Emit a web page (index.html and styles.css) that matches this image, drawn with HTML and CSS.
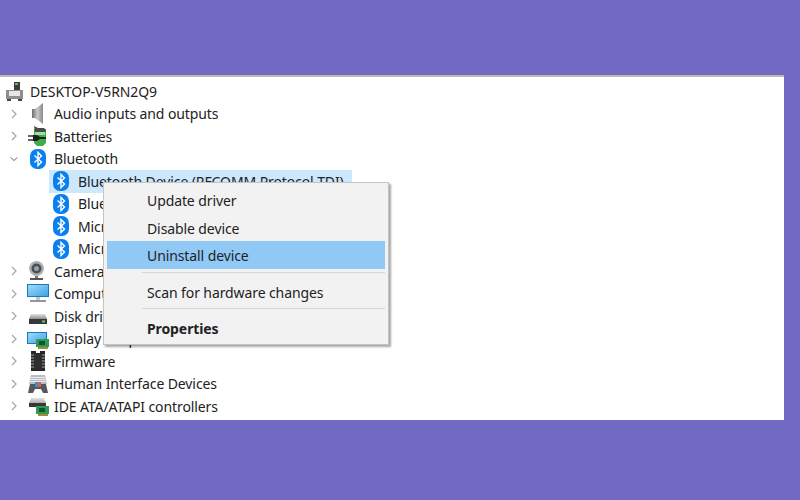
FILE: index.html
```html
<!DOCTYPE html>
<html lang="en">
<head>
    <meta charset="UTF-8">
    <title>Device Manager</title>
    <link rel="stylesheet" href="styles.css">
</head>
<body>
    <svg class="defs" width="0" height="0">
        <defs>
            <linearGradient id="speaker" x1="0" x2="1" y1="0" y2="0">
                <stop offset="0" stop-color="#6f6f6f"/>
                <stop offset="0.5" stop-color="#c9c9c9"/>
                <stop offset="1" stop-color="#8a8a8a"/>
            </linearGradient>
            <linearGradient id="screen" x1="0" x2="1" y1="0" y2="1">
                <stop offset="0" stop-color="#9fdcfa"/>
                <stop offset="1" stop-color="#3fa2e4"/>
            </linearGradient>
            <linearGradient id="drive" x1="0" x2="0" y1="0" y2="1">
                <stop offset="0" stop-color="#e2e2e2"/>
                <stop offset="1" stop-color="#8f8f8f"/>
            </linearGradient>
        </defs>
        <symbol id="bt" viewBox="0 0 22 22">
            <rect x="3" y="1" width="16" height="20" rx="7" fill="#0a7ff0"/>
            <path d="M7.5 7.5l7 6.5-3.5 3.5V4.500l3.500 3.500-7 6.500" fill="none" stroke="#fff" stroke-width="1.400"/>
        </symbol>
        <symbol id="closed" viewBox="0 0 8 10">
            <path d="M2 1l4 4-4 4" fill="none" stroke="#a6a6a6" stroke-width="1.200"/>
        </symbol>
        <symbol id="open" viewBox="0 0 10 8">
            <path d="M1 2l4 4 4-4" fill="none" stroke="#555" stroke-width="1.200"/>
        </symbol>
        <symbol id="card" viewBox="0 0 22 22">
            <path d="M9 11h13v8H9z" fill="#2f9a55"/>
            <path d="M12 13h6v4h-6z" fill="#14502c"/>
            <path d="M11 19h10v2H11z" fill="#a08a3c"/>
        </symbol>
    </svg>

    <div class="panel">
        <div class="tree">
            <div class="row root">
                <svg class="icon" viewBox="0 0 22 22">
                    <path d="M10 2h6v8h-6z" fill="#3d3d3d"/>
                    <path d="M11 3h3v2h-3z" fill="#4fbf4f"/>
                    <path d="M2 10h17v9H2z" fill="#8e8e8e"/>
                    <path d="M5 11h11v5H5z" fill="#e6e6e6"/>
                    <path d="M3 19h4v2H3zM14 19h4v2h-4z" fill="#444"/>
                </svg>
                <span>DESKTOP-V5RN2Q9</span>
            </div>
            <div class="row">
                <svg class="arrow"><use href="#closed"/></svg>
                <svg class="icon" viewBox="0 0 22 22">
                    <path d="M5 6h3l8-6v21l-8-6H5z" fill="url(#speaker)"/>
                </svg>
                <span>Audio inputs and outputs</span>
            </div>
            <div class="row">
                <svg class="arrow"><use href="#closed"/></svg>
                <svg class="icon" viewBox="0 0 22 22">
                    <path d="M7 4h12v14l-3 3h-6l-3-3z" fill="#3fae48"/>
                    <path d="M8 7h10v3H8z" fill="#a5dca5"/>
                    <path d="M7 1l4 2h6l2 2-1 2H8z" fill="#4a4a4a"/>
                    <path d="M1 11h6M1 15h6" stroke="#333" stroke-width="1.500"/>
                    <path d="M6 10h4l3 2h6v2h-6l-3 2H6z" fill="#1f1f1f"/>
                </svg>
                <span>Batteries</span>
            </div>
            <div class="row">
                <svg class="arrow"><use href="#open"/></svg>
                <svg class="icon"><use href="#bt"/></svg>
                <span>Bluetooth</span>
            </div>
            <div class="row child selected">
                <svg class="icon"><use href="#bt"/></svg>
                <span>Bluetooth Device (RFCOMM Protocol TDI)</span>
            </div>
            <div class="row child">
                <svg class="icon"><use href="#bt"/></svg>
                <span>Bluetooth Device (Personal Area Network)</span>
            </div>
            <div class="row child">
                <svg class="icon"><use href="#bt"/></svg>
                <span>Microsoft Bluetooth Enumerator</span>
            </div>
            <div class="row child">
                <svg class="icon"><use href="#bt"/></svg>
                <span>Microsoft Bluetooth LE Enumerator</span>
            </div>
            <div class="row">
                <svg class="arrow"><use href="#closed"/></svg>
                <svg class="icon" viewBox="0 0 22 22">
                    <circle cx="9.500" cy="8.500" r="7.500" fill="#b0b0b0"/>
                    <circle cx="9.500" cy="8.500" r="5" fill="#4d4d4d"/>
                    <circle cx="9.500" cy="8.500" r="2.500" fill="#8fa3b5"/>
                    <path d="M8 16h3v2H8z" fill="#777"/>
                    <path d="M3 18h13v2H3z" fill="#555"/>
                </svg>
                <span>Cameras</span>
            </div>
            <div class="row">
                <svg class="arrow"><use href="#closed"/></svg>
                <svg class="icon" viewBox="0 0 22 22">
                    <path d="M0 1h22v13H0z" fill="#1c79bd"/>
                    <path d="M1 2h20v11H1z" fill="url(#screen)"/>
                    <path d="M9 14h4v3H9z" fill="#c5c5c5"/>
                    <path d="M3 17h16v2H3z" fill="#8d98a3"/>
                </svg>
                <span>Computer</span>
            </div>
            <div class="row">
                <svg class="arrow"><use href="#closed"/></svg>
                <svg class="icon" viewBox="0 0 22 22">
                    <path d="M4 9h14l2 5H2z" fill="url(#drive)"/>
                    <path d="M2 14h18v5H2z" fill="#383838"/>
                    <path d="M15 15.500h3v2h-3z" fill="#5fd35f"/>
                </svg>
                <span>Disk drives</span>
            </div>
            <div class="row">
                <svg class="arrow"><use href="#closed"/></svg>
                <svg class="icon" viewBox="0 0 22 22">
                    <path d="M0 4h20v12H0z" fill="#1c79bd"/>
                    <path d="M1 5h18v10H1z" fill="url(#screen)"/>
                    <use href="#card" width="22" height="22"/>
                </svg>
                <span>Display adapters</span>
            </div>
            <div class="row">
                <svg class="arrow"><use href="#closed"/></svg>
                <svg class="icon" viewBox="0 0 22 22">
                    <path d="M4 1h5v2h4V1h5v20H4z" fill="#262626"/>
                    <path d="M4 5h14M4 8h14M4 11h14M4 14h14M4 17h14" stroke="#a8a8a8" stroke-width="1"/>
                    <path d="M7 4h8v15H7z" fill="#2e2e2e"/>
                </svg>
                <span>Firmware</span>
            </div>
            <div class="row">
                <svg class="arrow"><use href="#closed"/></svg>
                <svg class="icon" viewBox="0 0 22 22">
                    <path d="M4 2h14l2 9H2z" fill="#b7bcc4"/>
                    <path d="M4 4.500h14M3.500 6.500h15M3 8.500h16" stroke="#eef0f2" stroke-width="0.900"/>
                    <path d="M1 20l2-9h5l2 2h2l2-2h5l2 9h-5l-2-4H8l-2 4z" fill="#54585f"/>
                    <path d="M8 9h3v5H8z" fill="#3d8ed8"/>
                    <path d="M11 9h3v5h-3z" fill="#d9633f"/>
                </svg>
                <span>Human Interface Devices</span>
            </div>
            <div class="row">
                <svg class="arrow"><use href="#closed"/></svg>
                <svg class="icon" viewBox="0 0 22 22">
                    <path d="M4 3h13l2 5v3H2V8z" fill="url(#drive)"/>
                    <path d="M2 8h17v4H2z" fill="#383838"/>
                    <use href="#card" width="22" height="22"/>
                </svg>
                <span>IDE ATA/ATAPI controllers</span>
            </div>
        </div>

        <div class="menu">
            <div class="item">Update driver</div>
            <div class="item">Disable device</div>
            <div class="item active">Uninstall device</div>
            <div class="sep"></div>
            <div class="item">Scan for hardware changes</div>
            <div class="sep"></div>
            <div class="item bold">Properties</div>
        </div>
    </div>
</body>
</html>
```

FILE: styles.css
```css
body {
    margin: 0;
    height: 500px;
    overflow: hidden;
    padding-top: 75px;
    box-sizing: border-box;
    background-color: #7269c4;
    font-family: "Noto Sans", Arial, sans-serif;
}
.defs {
    position: absolute;
}
.panel {
    position: relative;
    width: 784px;
    height: 345px;
    box-sizing: border-box;
    overflow: hidden;
    background-color: #fff;
    border-top: 2px solid #b9b9c2;
}
.tree {
    padding-top: 3px;
    font-size: 14px;
    letter-spacing: -0.1px;
    color: #222;
}
.row {
    display: flex;
    align-items: center;
    height: 22.5px;
    padding-left: 10px;
    white-space: nowrap;
}
.row .arrow {
    width: 8px;
    height: 10px;
    margin-right: 9px;
}
.row .icon {
    width: 22px;
    height: 22px;
    margin-right: 5px;
    flex: none;
}
.row.root {
    padding-left: 4px;
}
.row.root .icon {
    margin-right: 4px;
}
.row.child {
    width: 303px;
    margin-left: 49px;
    padding-left: 1px;
    box-sizing: border-box;
}
.row.child .icon {
    margin-right: 6px;
}
.row.selected {
    background-color: #cce8ff;
}
.menu {
    position: absolute;
    left: 103px;
    top: 105px;
    width: 286px;
    height: 163px;
    box-sizing: border-box;
    padding: 3px 3px 3px 3px;
    background-color: #f2f2f2;
    border: 1px solid #c4c4c4;
    box-shadow: 2px 2px 2px rgba(0, 0, 0, 0.35);
    font-size: 14px;
    letter-spacing: -0.1px;
    color: #222;
}
.item {
    height: 27.5px;
    line-height: 29px;
    padding-left: 40px;
}
.item.active {
    background-color: #90c8f6;
}
.item.bold {
    font-weight: bold;
}
.sep {
    height: 1px;
    margin: 3px 0 5px 35px;
    background-color: #d7d7d7;
}
```
